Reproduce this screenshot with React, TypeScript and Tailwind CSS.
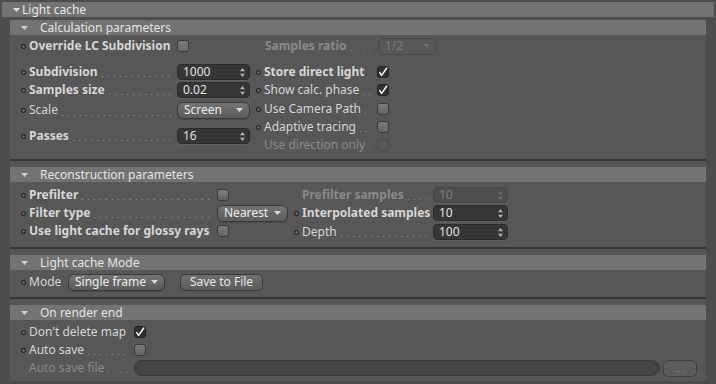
import React from "react";

const LABEL = "text-[#d6d6d6]";
const DIM = "text-[#8a8a8a]";

function Dot() {
  return <span className="block w-[5px] h-[5px] rounded-full border border-[#151515] bg-[#6a6a6a] shrink-0" />;
}

function Leader({ dim }: { dim?: boolean }) {
  return (
    <span
      className={`flex-1 h-[1px] self-end mb-[4px] ml-[4px] bg-[repeating-linear-gradient(90deg,#939393_0px,#939393_1px,transparent_1px,transparent_6px)] ${
        dim ? "opacity-70" : ""
      }`}
    />
  );
}

function Label({
  text,
  w,
  bold,
  dim,
  dot = true,
  leader = true,
}: {
  text: string;
  w: string;
  bold?: boolean;
  dim?: boolean;
  dot?: boolean;
  leader?: boolean;
}) {
  return (
    <div className="flex items-center h-full shrink-0">
      <span className="w-[5px] flex items-center">{dot ? <Dot /> : null}</span>
      <div className={`${w} flex items-center h-full ml-[3px] pr-[6px]`}>
        <span className={`whitespace-nowrap ${bold ? "font-bold" : ""} ${dim ? DIM : LABEL}`}>{text}</span>
        {leader ? <Leader dim={dim} /> : null}
      </div>
    </div>
  );
}

function Spinner({ dim }: { dim?: boolean }) {
  return (
    <svg width="5" height="9" viewBox="0 0 5 9" className="shrink-0">
      <path d="M2.5 0 L5 3.2 L0 3.2 Z" fill={dim ? "#6e6e6e" : "#b0b0b0"} />
      <path d="M2.5 9 L5 5.8 L0 5.8 Z" fill={dim ? "#6e6e6e" : "#b0b0b0"} />
    </svg>
  );
}

function Num({ value, w, dim }: { value: string; w: string; dim?: boolean }) {
  return (
    <div
      className={`${w} h-[16px] rounded-[4px] ${dim ? "bg-[#4e4e4e] border-[#474747]" : "bg-[#363636] border-[#2c2c2c]"} border flex items-center pl-[5px] pr-[4px] shadow-[0_1px_0_#616161]`}
    >
      <span className={`flex-1 leading-none ${dim ? "text-[#7c7c7c]" : "text-[#e2e2e2]"}`}>{value}</span>
      <Spinner dim={dim} />
    </div>
  );
}

function Check({ checked, dim }: { checked?: boolean; dim?: boolean }) {
  if (checked) {
    return (
      <div className="w-[12px] h-[12px] rounded-[3px] bg-[#2f2f2f] border border-[#252525] flex items-center justify-center shrink-0">
        <svg width="10" height="10" viewBox="0 0 10 10">
          <path d="M1.8 5.6 L3.6 8.4 L8.6 1.2" stroke="#f2f2f2" strokeWidth="1.6" fill="none" strokeLinecap="round" strokeLinejoin="round" />
        </svg>
      </div>
    );
  }
  return (
    <div
      className={`w-[12px] h-[12px] rounded-[3px] border shrink-0 ${
        dim ? "border-[#4a4a4a] bg-[#595959]" : "border-[#3a3a3a] bg-gradient-to-b from-[#7b7b7b] to-[#646464]"
      }`}
    />
  );
}

function Tri({ color = "#c8c8c8" }: { color?: string }) {
  return (
    <svg width="7" height="4" viewBox="0 0 7 4" className="shrink-0">
      <path d="M0 0 L7 0 L3.5 4 Z" fill={color} />
    </svg>
  );
}

function Drop({ value, w, dim }: { value: string; w: string; dim?: boolean }) {
  return (
    <div
      className={`${w} h-[17px] rounded-[6px] border flex items-center justify-between pl-[6px] pr-[6px] shrink-0 ${
        dim
          ? "border-[#4a4a4a] bg-[#575757] text-[#7c7c7c]"
          : "border-[#3a3a3a] bg-gradient-to-b from-[#737373] to-[#5c5c5c] text-[#ececec] shadow-[0_1px_0_#4a4a4a]"
      }`}
    >
      <span className="leading-none">{value}</span>
      <Tri color={dim ? "#6e6e6e" : "#d8d8d8"} />
    </div>
  );
}

function Button({ text, w }: { text: string; w: string }) {
  return (
    <div className={`${w} h-[17px] rounded-[5px] border border-[#3a3a3a] bg-gradient-to-b from-[#6e6e6e] to-[#5c5c5c] flex items-center justify-center text-[#e6e6e6] shrink-0`}>
      {text}
    </div>
  );
}

function Header({ title }: { title: string }) {
  return (
    <div className="h-[15px] bg-[#737373] flex items-center shrink-0">
      <span className="ml-[11px]">
        <Tri color="#d0d0d0" />
      </span>
      <span className="ml-[12px] text-[#e4e4e4] leading-none">{title}</span>
    </div>
  );
}

function Row({ children, cls = "" }: { children: React.ReactNode; cls?: string }) {
  return <div className={`h-[18px] flex items-center ${cls}`}>{children}</div>;
}

export default function App() {
  return (
    <div className="w-[716px] h-[384px] bg-[#4d4d4d] overflow-hidden font-['Noto_Sans',sans-serif] text-[12px] leading-none pt-[2px] flex flex-col">
      {/* top header */}
      <div className="ml-[2px] w-[712px] h-[15px] bg-[#727272] flex items-center shrink-0">
        <span className="ml-[11px]">
          <Tri color="#e0e0e0" />
        </span>
        <span className="ml-[2px] text-[#e8e8e8]">Light cache</span>
      </div>

      <div className="ml-[10px] w-[696px] mt-[3px] bg-[#575757] flex flex-col h-[361px]">
        {/* Section 1 */}
        <Header title="Calculation parameters" />
        <div className="h-[124px] pl-[11px] flex flex-col">
          <Row cls="mt-[2px]">
            <Label text="Override LC Subdivision" w="w-[148px]" bold leader={false} />
            <Check />
            <div className="ml-[68px] flex items-center h-full">
              <Label text="Samples ratio" w="w-[113px]" bold dim dot={false} />
              <Drop value="1/2" w="w-[59px]" dim />
            </div>
          </Row>
          <div className="flex mt-[8px]">
            <div className="flex flex-col w-[235px]">
              <Row>
                <Label text="Subdivision" w="w-[148px]" bold />
                <Num value="1000" w="w-[73px]" />
              </Row>
              <Row>
                <Label text="Samples size" w="w-[148px]" bold />
                <Num value="0.02" w="w-[73px]" />
              </Row>
              <div className="h-[20px] flex items-center mt-[1px]">
                <Label text="Scale" w="w-[148px]" />
                <Drop value="Screen" w="w-[73px]" />
              </div>
              <Row cls="mt-[7px]">
                <Label text="Passes" w="w-[148px]" bold />
                <Num value="16" w="w-[73px]" />
              </Row>
            </div>
            <div className="flex flex-col">
              <Row>
                <Label text="Store direct light" w="w-[113px]" bold leader={false} />
                <Check checked />
              </Row>
              <Row>
                <Label text="Show calc. phase" w="w-[113px]" />
                <Check checked />
              </Row>
              <Row cls="mt-[1px]">
                <Label text="Use Camera Path" w="w-[113px]" />
                <Check />
              </Row>
              <Row>
                <Label text="Adaptive tracing" w="w-[113px]" />
                <Check />
              </Row>
              <Row>
                <Label text="Use direction only" w="w-[113px]" dim dot={false} />
                <Check dim />
              </Row>
            </div>
          </div>
        </div>
        <div className="h-[2px] bg-[#363636] shrink-0" />
        <div className="h-[6px] shrink-0" />

        {/* Section 2 */}
        <Header title="Reconstruction parameters" />
        <div className="h-[65px] pl-[11px] flex pt-[4px]">
          <div className="flex flex-col w-[273px]">
            <Row>
              <Label text="Prefilter" w="w-[188px]" bold />
              <Check />
            </Row>
            <Row>
              <Label text="Filter type" w="w-[188px]" bold />
              <Drop value="Nearest" w="w-[71px]" />
            </Row>
            <Row>
              <Label text="Use light cache for glossy rays" w="w-[188px]" bold leader={false} />
              <Check />
            </Row>
          </div>
          <div className="flex flex-col">
            <Row>
              <Label text="Prefilter samples" w="w-[131px]" bold dim dot={false} />
              <Num value="10" w="w-[75px]" dim />
            </Row>
            <Row>
              <Label text="Interpolated samples" w="w-[131px]" bold leader={false} />
              <Num value="10" w="w-[75px]" />
            </Row>
            <Row cls="mt-[1px]">
              <Label text="Depth" w="w-[131px]" />
              <Num value="100" w="w-[75px]" />
            </Row>
          </div>
        </div>
        <div className="h-[2px] bg-[#363636] shrink-0" />
        <div className="h-[6px] shrink-0" />

        {/* Section 3 */}
        <Header title="Light cache Mode" />
        <div className="h-[27px] pl-[11px] pt-[3px]">
          <Row>
            <Label text="Mode" w="w-[39px]" leader={false} />
            <Drop value="Single frame" w="w-[97px]" />
            <span className="ml-[15px]">
              <Button text="Save to File" w="w-[83px]" />
            </span>
          </Row>
        </div>
        <div className="h-[2px] bg-[#363636] shrink-0" />
        <div className="h-[6px] shrink-0" />

        {/* Section 4 */}
        <Header title="On render end" />
        <div className="flex-1 pl-[11px] pt-[3px] flex flex-col">
          <Row>
            <Label text="Don't delete map" w="w-[105px]" leader={false} />
            <Check checked />
          </Row>
          <Row>
            <Label text="Auto save" w="w-[105px]" />
            <Check />
          </Row>
          <Row>
            <Label text="Auto save file" w="w-[105px]" dim dot={false} />
            <div className="w-[526px] h-[16px] rounded-full bg-[#444444] border border-[#3a3a3a] shrink-0" />
            <div className="ml-[3px] w-[34px] h-[17px] rounded-[5px] border border-[#3f3f3f] bg-[#5c5c5c] flex items-center justify-center text-[#9a9a9a] text-[9px] tracking-[1px] shrink-0">
              ...
            </div>
          </Row>
        </div>
      </div>
    </div>
  );
}
